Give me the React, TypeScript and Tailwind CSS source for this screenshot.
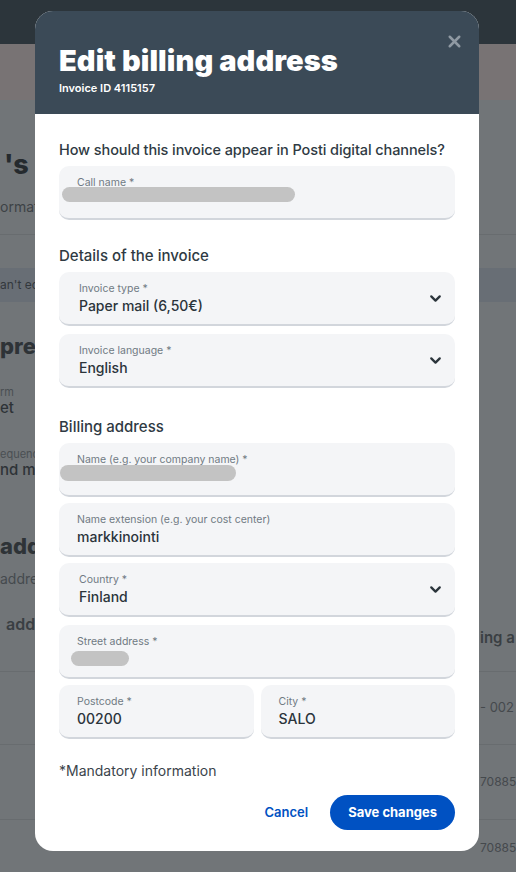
import React from 'react';
import { ChevronDown, X } from 'lucide-react';

const font = { fontFamily: 'Inter, "Open Sans", sans-serif' };

type FieldProps = {
    label: string;
    value?: string;
    select?: boolean;
    blur?: string;
    className?: string;
};

const Field: React.FC<FieldProps> = ({ label, value, select, blur, className }) => (
    <div className={`relative h-[54px] rounded-[10px] bg-[#f4f5f7] border-b-2 border-[#d2d6dc] flex items-center ${select ? 'pl-[20px] pr-[11px]' : 'pl-[18px] pr-4'} ${className ?? ''}`}>
        <div className="flex-1 flex flex-col pt-[1px]">
            <span className="text-[10.5px] leading-[14px] text-[#707a83]">{label}</span>
            {value ? (
                <span className="text-[14px] leading-[19px] font-medium text-[#2b343b]">{value}</span>
            ) : (
                <span className="h-[19px]" />
            )}
        </div>
        {select && <ChevronDown size={17} strokeWidth={3.2} className="text-[#2b343b]" />}
        {/* redacted value */}
        {blur && <span className={`absolute rounded-full bg-[#c3c3c3] ${blur}`} />}
    </div>
);

export default function App() {
    return (
        <div className="relative h-[872px] w-full overflow-hidden bg-[#717578]" style={font}>
            {/* dimmed page behind the dialog */}
            <div className="h-[44px] bg-[#2c353b]" />
            <div className="h-[56px] bg-[#787374]" />
            <div className="flex flex-col">
                <div className="h-[135px] border-b border-[#686c6f] flex flex-col pt-[50px]">
                    <span className="ml-[4px] text-[27px] leading-[30px] font-extrabold text-[#252a2e]">'s I</span>
                    <span className="mt-[16px] text-[14px] text-[#3d4246]">ormati</span>
                </div>
                <div className="mt-[33px] h-[34px] bg-[#686e75] flex items-center">
                    <span className="text-[12px] text-[#33383d]">an't ed</span>
                </div>
                <span className="mt-[30px] text-[22px] leading-[28px] font-extrabold text-[#2e3337]">prefe</span>
                <span className="mt-[26px] text-[11px] leading-[12px] text-[#4a4f53]">rm</span>
                <span className="text-[15px] leading-[20px] font-medium text-[#2e3337]">et</span>
                <span className="mt-[30px] text-[11px] leading-[12px] text-[#4a4f53]">equency</span>
                <span className="text-[15px] leading-[20px] font-medium text-[#2e3337]">nd mo</span>
                <span className="mt-[52px] text-[22px] leading-[28px] font-extrabold text-[#2e3337]">addr</span>
                <span className="mt-[8px] text-[14px] text-[#454a4e]">addres</span>
                <div className="mt-[24px] flex justify-between items-end">
                    <span className="ml-[6px] text-[16px] leading-[22px] font-semibold text-[#3a3f43]">addr</span>
                    <span className="mb-[-14px] text-[15px] leading-[22px] font-semibold text-[#3a3f43] w-[36px] whitespace-nowrap">ing a</span>
                </div>
                <div className="mt-[36px] h-[73px] border-t border-[#686c6f] flex justify-end items-center">
                    <span className="text-[13px] text-[#45494d] w-[36px] whitespace-nowrap">- 002</span>
                </div>
                <div className="h-[75px] border-t border-[#686c6f] flex justify-end items-center">
                    <span className="text-[12px] text-[#45494d] w-[36px] whitespace-nowrap">70885</span>
                </div>
                <div className="h-[56px] border-t border-[#686c6f] flex justify-end items-center">
                    <span className="text-[12px] text-[#45494d] w-[36px] whitespace-nowrap">70885</span>
                </div>
            </div>

            {/* Dialog */}
            <div className="absolute left-[35px] top-[11px] w-[444px] rounded-[18px] bg-white overflow-hidden">
                <div className="relative bg-[#3b4a57] h-[103px] px-6 pt-[33px]">
                    <h1 className="text-[29px] leading-[34px] font-black text-white tracking-[0.1px]">Edit billing address</h1>
                    <p className="mt-[3px] text-[11px] leading-[14px] font-semibold text-white">Invoice ID 4115157</p>
                    <button className="absolute right-[15px] top-[21px] text-[#8f99a2]">
                        <X size={19} strokeWidth={3.2} />
                    </button>
                </div>

                <div className="px-6 pt-[26px] pb-[21px] text-[#2b343b]">
                    <h2 className="text-[14.5px] leading-[20px] font-medium text-[#2f3a43] whitespace-nowrap tracking-[-0.1px]">How should this invoice appear in Posti digital channels?</h2>
                    <Field className="mt-[6px]" label="Call name *" blur="left-[3px] top-[21px] w-[233px] h-[15px]" />

                    <h2 className="mt-[26px] text-[15px] leading-[20px] font-medium text-[#2f3a43]">Details of the invoice</h2>
                    <Field className="mt-[6px]" label="Invoice type *" value="Paper mail (6,50€)" select />
                    <Field className="mt-[8px]" label="Invoice language *" value="English" select />

                    <h2 className="mt-[29px] text-[15px] leading-[20px] font-medium text-[#2f3a43]">Billing address</h2>
                    <Field className="mt-[6px]" label="Name (e.g. your company name) *" blur="left-[1px] top-[22px] w-[176px] h-[16px]" />
                    <Field className="mt-[6px]" label="Name extension (e.g. your cost center)" value="markkinointi" />
                    <Field className="mt-[6px]" label="Country *" value="Finland" select />
                    <Field className="mt-[8px]" label="Street address *" blur="left-[12px] top-[26px] w-[58px] h-[15px]" />
                    <div className="mt-[6px] grid grid-cols-2 gap-[7px]">
                        <Field label="Postcode *" value="00200" />
                        <Field label="City *" value="SALO" />
                    </div>

                    <p className="mt-[22px] text-[14px] leading-[20px] text-[#3b444b]">*Mandatory information</p>

                    <div className="mt-[14px] flex justify-end items-center gap-[22px]">
                        <button className="text-[13px] font-semibold text-[#0051c2]">Cancel</button>
                        <button className="h-[35px] px-[18px] rounded-full bg-[#0051c2] text-white text-[13px] font-bold">Save changes</button>
                    </div>
                </div>
            </div>
        </div>
    );
}
